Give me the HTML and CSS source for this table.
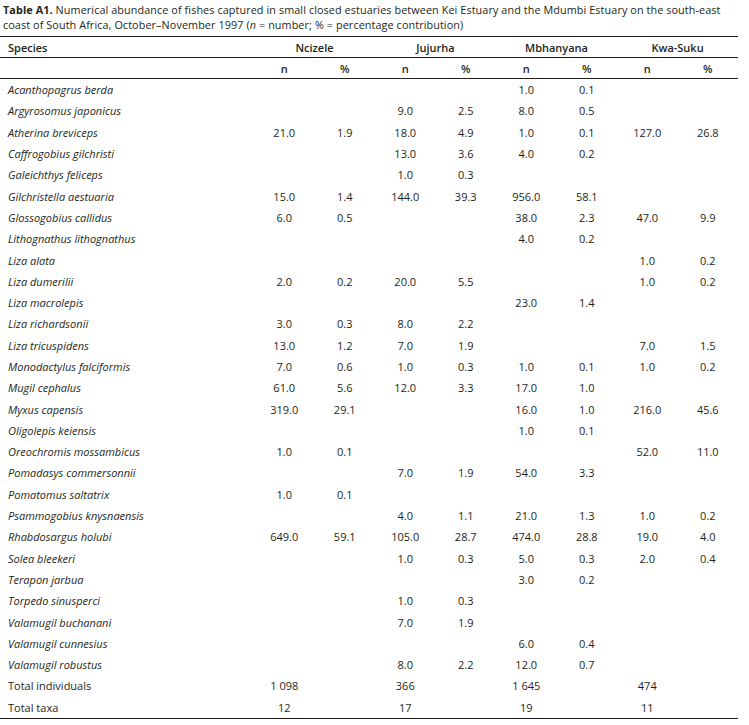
FILE: index.html
```html
<!DOCTYPE html>
<html lang="en">
<head>
<meta charset="utf-8">
<title>Table A1</title>
<link rel="stylesheet" href="styles.css">
</head>
<body>
<div class="page">
<p class="caption"><span class="cap-line"><b>Table A1.</b> Numerical abundance of fishes captured in small closed estuaries between Kei Estuary and the Mdumbi Estuary on the south-east</span><span class="cap-line">coast of South Africa, October–November 1997 (<i>n</i> = number; % = percentage contribution)</span></p>
<table class="fish">
<colgroup><col class="c-sp"><col class="c-v"><col class="c-v"><col class="c-v"><col class="c-v"><col class="c-v"><col class="c-v"><col class="c-v"><col class="c-v"></colgroup>
<thead>
<tr class="h1"><th class="sp">Species</th><th colspan="2">Ncizele</th><th colspan="2">Jujurha</th><th colspan="2">Mbhanyana</th><th colspan="2">Kwa-Suku</th></tr>
<tr class="h2"><th></th><th>n</th><th>%</th><th>n</th><th>%</th><th>n</th><th>%</th><th>n</th><th>%</th></tr>
</thead>
<tbody>
<tr><td class="sp"><i>Acanthopagrus berda</i></td><td></td><td></td><td></td><td></td><td>1.0</td><td>0.1</td><td></td><td></td></tr>
<tr><td class="sp"><i>Argyrosomus japonicus</i></td><td></td><td></td><td>9.0</td><td>2.5</td><td>8.0</td><td>0.5</td><td></td><td></td></tr>
<tr><td class="sp"><i>Atherina breviceps</i></td><td>21.0</td><td>1.9</td><td>18.0</td><td>4.9</td><td>1.0</td><td>0.1</td><td>127.0</td><td>26.8</td></tr>
<tr><td class="sp"><i>Caffrogobius gilchristi</i></td><td></td><td></td><td>13.0</td><td>3.6</td><td>4.0</td><td>0.2</td><td></td><td></td></tr>
<tr><td class="sp"><i>Galeichthys feliceps</i></td><td></td><td></td><td>1.0</td><td>0.3</td><td></td><td></td><td></td><td></td></tr>
<tr><td class="sp"><i>Gilchristella aestuaria</i></td><td>15.0</td><td>1.4</td><td>144.0</td><td>39.3</td><td>956.0</td><td>58.1</td><td></td><td></td></tr>
<tr><td class="sp"><i>Glossogobius callidus</i></td><td>6.0</td><td>0.5</td><td></td><td></td><td>38.0</td><td>2.3</td><td>47.0</td><td>9.9</td></tr>
<tr><td class="sp"><i>Lithognathus lithognathus</i></td><td></td><td></td><td></td><td></td><td>4.0</td><td>0.2</td><td></td><td></td></tr>
<tr><td class="sp"><i>Liza alata</i></td><td></td><td></td><td></td><td></td><td></td><td></td><td>1.0</td><td>0.2</td></tr>
<tr><td class="sp"><i>Liza dumerilii</i></td><td>2.0</td><td>0.2</td><td>20.0</td><td>5.5</td><td></td><td></td><td>1.0</td><td>0.2</td></tr>
<tr><td class="sp"><i>Liza macrolepis</i></td><td></td><td></td><td></td><td></td><td>23.0</td><td>1.4</td><td></td><td></td></tr>
<tr><td class="sp"><i>Liza richardsonii</i></td><td>3.0</td><td>0.3</td><td>8.0</td><td>2.2</td><td></td><td></td><td></td><td></td></tr>
<tr><td class="sp"><i>Liza tricuspidens</i></td><td>13.0</td><td>1.2</td><td>7.0</td><td>1.9</td><td></td><td></td><td>7.0</td><td>1.5</td></tr>
<tr><td class="sp"><i>Monodactylus falciformis</i></td><td>7.0</td><td>0.6</td><td>1.0</td><td>0.3</td><td>1.0</td><td>0.1</td><td>1.0</td><td>0.2</td></tr>
<tr><td class="sp"><i>Mugil cephalus</i></td><td>61.0</td><td>5.6</td><td>12.0</td><td>3.3</td><td>17.0</td><td>1.0</td><td></td><td></td></tr>
<tr><td class="sp"><i>Myxus capensis</i></td><td>319.0</td><td>29.1</td><td></td><td></td><td>16.0</td><td>1.0</td><td>216.0</td><td>45.6</td></tr>
<tr><td class="sp"><i>Oligolepis keiensis</i></td><td></td><td></td><td></td><td></td><td>1.0</td><td>0.1</td><td></td><td></td></tr>
<tr><td class="sp"><i>Oreochromis mossambicus</i></td><td>1.0</td><td>0.1</td><td></td><td></td><td></td><td></td><td>52.0</td><td>11.0</td></tr>
<tr><td class="sp"><i>Pomadasys commersonnii</i></td><td></td><td></td><td>7.0</td><td>1.9</td><td>54.0</td><td>3.3</td><td></td><td></td></tr>
<tr><td class="sp"><i>Pomatomus saltatrix</i></td><td>1.0</td><td>0.1</td><td></td><td></td><td></td><td></td><td></td><td></td></tr>
<tr><td class="sp"><i>Psammogobius knysnaensis</i></td><td></td><td></td><td>4.0</td><td>1.1</td><td>21.0</td><td>1.3</td><td>1.0</td><td>0.2</td></tr>
<tr><td class="sp"><i>Rhabdosargus holubi</i></td><td>649.0</td><td>59.1</td><td>105.0</td><td>28.7</td><td>474.0</td><td>28.8</td><td>19.0</td><td>4.0</td></tr>
<tr><td class="sp"><i>Solea bleekeri</i></td><td></td><td></td><td>1.0</td><td>0.3</td><td>5.0</td><td>0.3</td><td>2.0</td><td>0.4</td></tr>
<tr><td class="sp"><i>Terapon jarbua</i></td><td></td><td></td><td></td><td></td><td>3.0</td><td>0.2</td><td></td><td></td></tr>
<tr><td class="sp"><i>Torpedo sinusperci</i></td><td></td><td></td><td>1.0</td><td>0.3</td><td></td><td></td><td></td><td></td></tr>
<tr><td class="sp"><i>Valamugil buchanani</i></td><td></td><td></td><td>7.0</td><td>1.9</td><td></td><td></td><td></td><td></td></tr>
<tr><td class="sp"><i>Valamugil cunnesius</i></td><td></td><td></td><td></td><td></td><td>6.0</td><td>0.4</td><td></td><td></td></tr>
<tr><td class="sp"><i>Valamugil robustus</i></td><td></td><td></td><td>8.0</td><td>2.2</td><td>12.0</td><td>0.7</td><td></td><td></td></tr>
<tr><td class="sp">Total individuals</td><td>1 098</td><td></td><td>366</td><td></td><td>1 645</td><td></td><td>474</td><td></td></tr>
<tr class="last"><td class="sp">Total taxa</td><td>12</td><td></td><td>17</td><td></td><td>19</td><td></td><td>11</td><td></td></tr>
</tbody>
</table>
</div>
</body>
</html>
```

FILE: styles.css
```css
html, body {
  margin: 0;
  padding: 0;
  background: #ffffff;
}

body {
  font-family: "Open Sans", "Liberation Sans", sans-serif;
  color: #231f20;
  font-size: 11px;
}

.page {
  width: 738px;
  padding: 2px 0 0 0;
}

.caption {
  margin: 0;
  padding: 0 0 0 3px;
  line-height: 15px;
  font-size: 10.8px;
  letter-spacing: 0.1px;
}

.cap-line {
  display: block;
  white-space: nowrap;
}

.caption b {
  font-weight: 700;
}

.fish {
  margin-top: 4px;
  width: 738px;
  border-collapse: collapse;
  table-layout: fixed;
  border-top: 1px solid #231f20;
  border-bottom: 1px solid #231f20;
}

.c-sp {
  width: 254px;
}

.c-v {
  width: 60.5px;
}

.fish th {
  font-weight: 600;
  text-align: center;
  height: 20px;
  padding: 0;
  border-bottom: 1px solid #231f20;
}

.fish th.sp {
  text-align: left;
  padding-left: 8px;
}

.fish td {
  text-align: center;
  padding: 0;
  height: 21.3px;
  white-space: nowrap;
}

.fish td.sp {
  text-align: left;
  padding-left: 8px;
}
```
